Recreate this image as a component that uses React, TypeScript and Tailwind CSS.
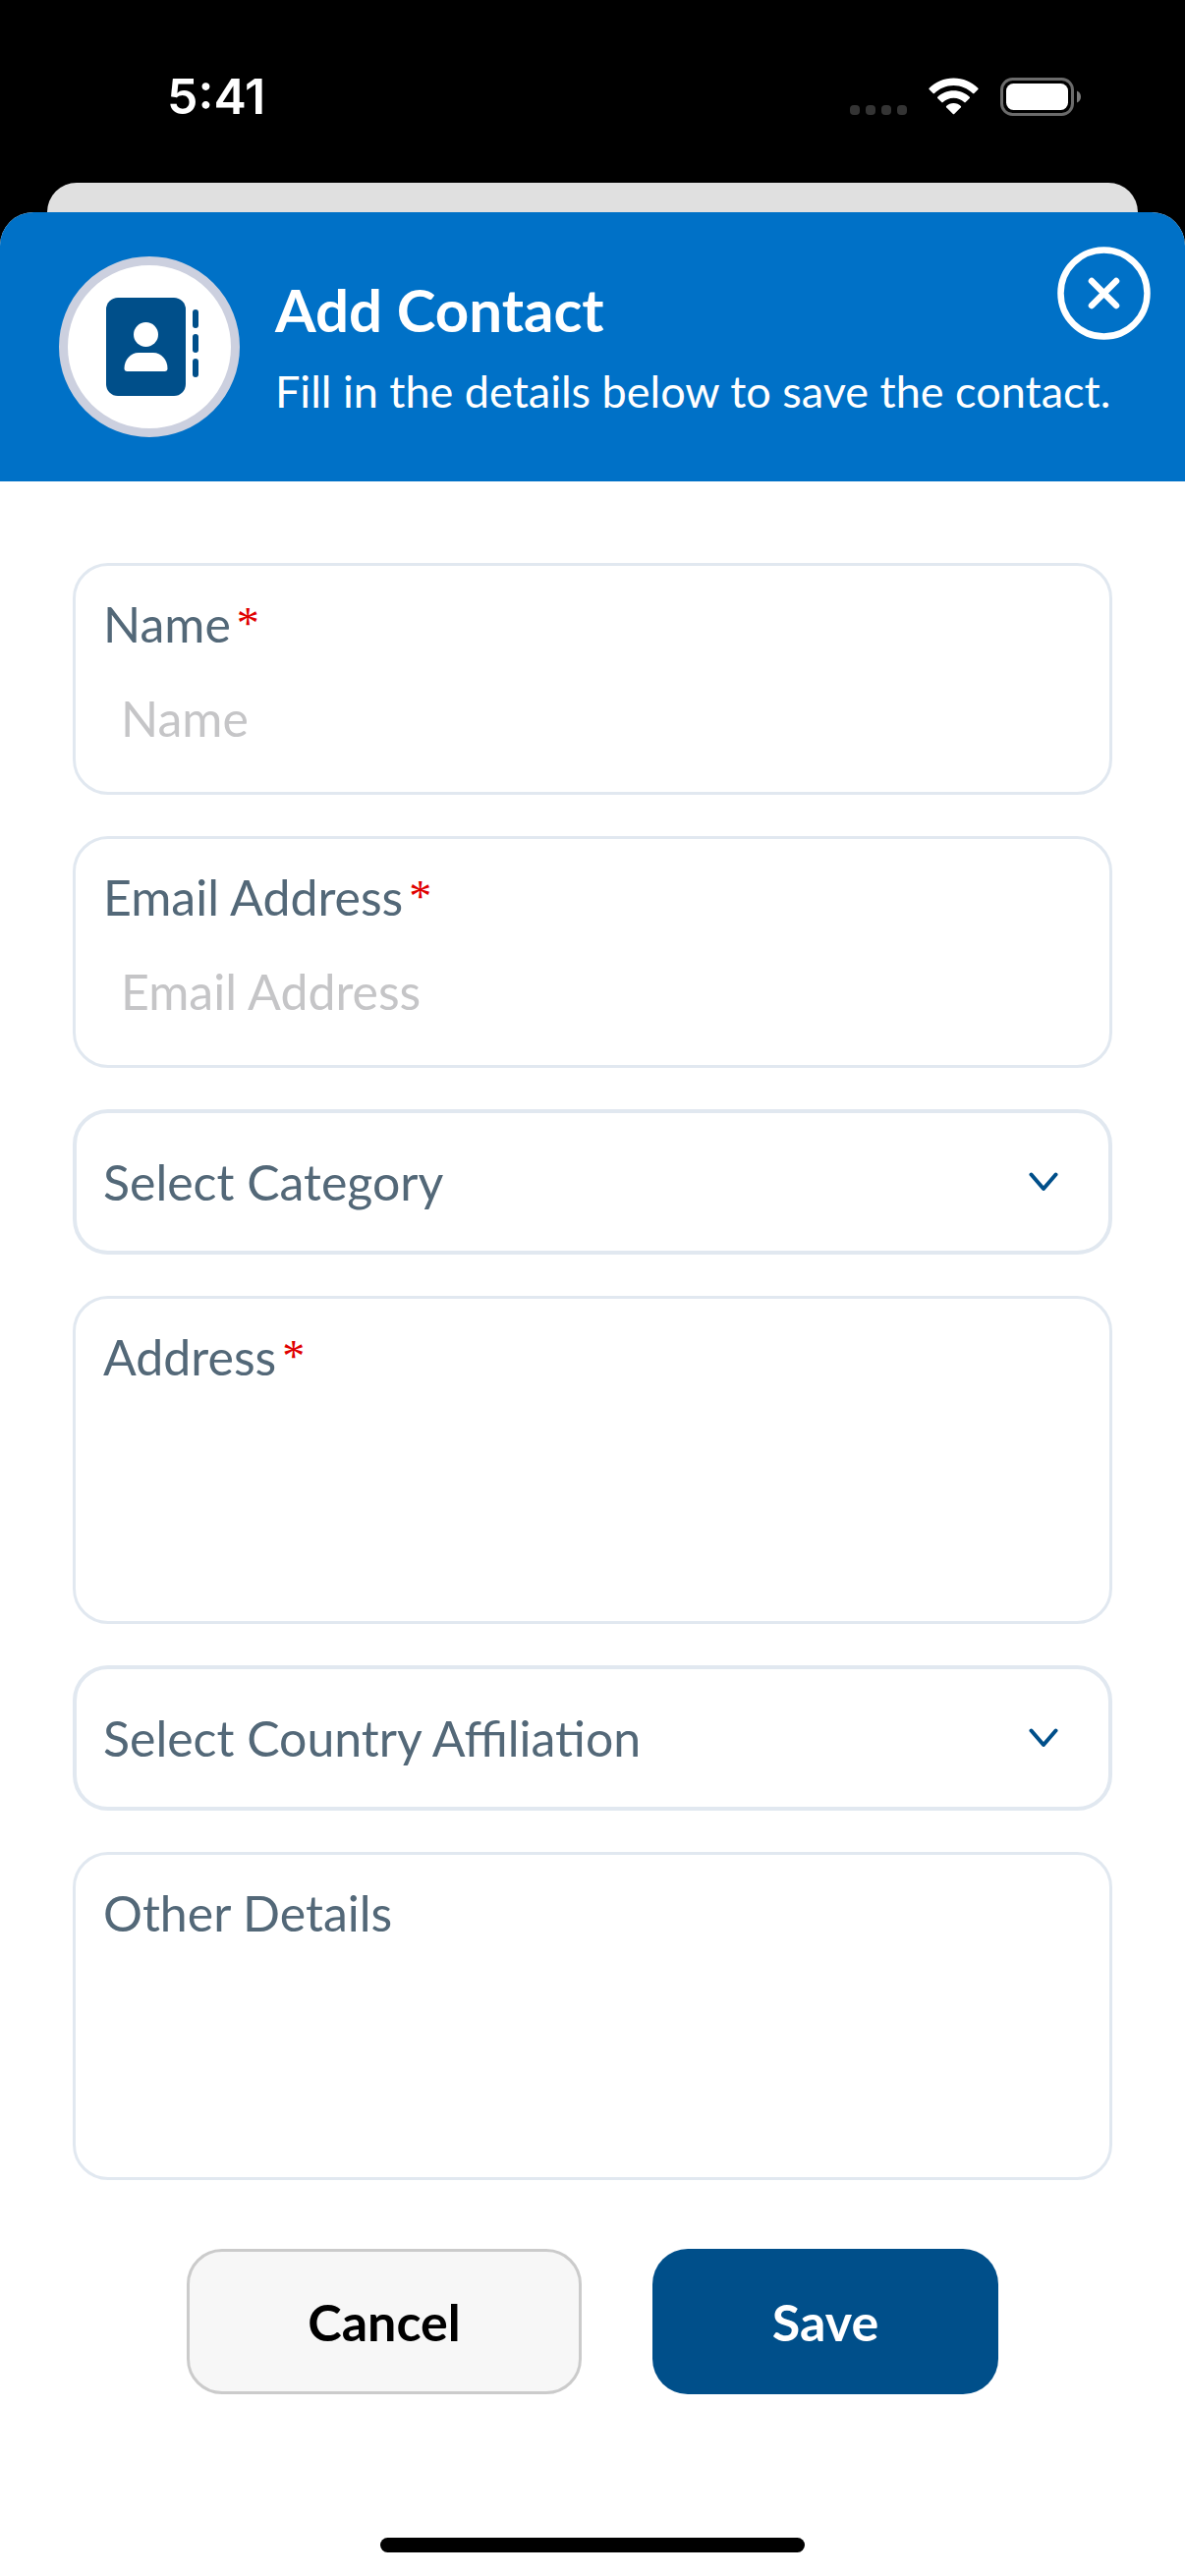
import { useState } from "react";

const categories = ["Family", "Work", "Supplier"];
const countries = ["United Kingdom", "United States", "Canada"];

function StatusBar() {
  return (
    <div className="flex h-[186px] items-center justify-between bg-black pr-[106px] pl-[170px] pt-[10px]">
      <span className="font-['Inter',sans-serif] text-[50px] leading-[60px] font-semibold text-white">5:41</span>
      <div className="flex items-center gap-[22px]">
        <div className="flex gap-[6px] pt-[27px]">
          {[0, 1, 2, 3].map((dot) => (
            <span key={dot} className="h-[10px] w-[10px] rounded-[4px] bg-[#343434]" />
          ))}
        </div>
        <svg className="h-[38px] w-[51px]" viewBox="0 0 51 38" fill="#fff">
          <path d="M25.5 0.5C35.2 0.5 44 4.3 50.4 10.7Q51 11.4 50.4 12L46.4 16Q45.7 16.6 45 16C39.9 11.1 33 8 25.5 8S11.1 11.1 6 16Q5.3 16.6 4.6 16L0.6 12Q0 11.4 0.6 10.7C7 4.3 15.8 0.5 25.5 0.5Z" />
          <path d="M25.5 13.3C31.9 13.3 37.6 15.8 41.8 19.8Q42.4 20.5 41.8 21.1L37.7 25.1Q37 25.7 36.3 25.1C33.5 22.4 29.7 20.8 25.5 20.8S17.5 22.4 14.7 25.1Q14 25.7 13.3 25.1L9.2 21.1Q8.6 20.5 9.2 19.8C13.4 15.8 19.1 13.3 25.5 13.3Z" />
          <path d="M25.5 26.1C28.4 26.1 31 27.2 32.9 28.9Q33.5 29.5 32.9 30.2L26.2 37Q25.5 37.6 24.8 37L18.1 30.2Q17.5 29.5 18.1 28.9C20 27.2 22.6 26.1 25.5 26.1Z" />
        </svg>
        <svg className="h-[39px] w-[82px]" viewBox="0 0 82 39" fill="none">
          <rect x="1.5" y="1.5" width="72" height="36" rx="11" stroke="#6b6b6b" strokeWidth="3" />
          <rect x="6" y="6" width="63" height="27" rx="7.5" fill="#fff" />
          <path d="M78 13.5C80.5 14.5 82 16.8 82 19.5S80.5 24.5 78 25.5Z" fill="#7a7a7a" />
        </svg>
      </div>
    </div>
  );
}

function ContactBookIcon() {
  return (
    <svg className="h-[100px] w-[94px]" viewBox="0 0 94 100">
      <rect x="0" y="0" width="81" height="100" rx="12" fill="#004f8a" />
      <circle cx="40.5" cy="37.5" r="12.5" fill="#fff" />
      <path d="M33 56H48C56 56 62.5 63 62.5 72Q62.5 75 59.5 75H21.5Q18.5 75 18.5 72C18.5 63 25 56 33 56Z" fill="#fff" />
      <rect x="88" y="12" width="6" height="19" rx="3" fill="#004f8a" />
      <rect x="88" y="37" width="6" height="19" rx="3" fill="#004f8a" />
      <rect x="88" y="62" width="6" height="19" rx="3" fill="#004f8a" />
    </svg>
  );
}

function FieldLabel({ id, label, required }: { id: string; label: string; required?: boolean }) {
  return (
    <label htmlFor={id} className="flex gap-[6px] text-[50px] leading-[60px] text-[#536878]">
      {label}
      {required && <span className="font-['Liberation_Serif',serif] text-[46px] text-[#e00000]">*</span>}
    </label>
  );
}

function TextField({ id, label, type }: { id: string; label: string; type: string }) {
  return (
    <div className="flex flex-col gap-[36px] rounded-[36px] border-[3px] border-[#e1e8f0] px-[28px] pt-[29px] pb-[45px]">
      <FieldLabel id={id} label={label} required />
      <input
        id={id}
        type={type}
        placeholder={label}
        className="h-[60px] w-full px-[18px] text-[50px] leading-[60px] text-[#536878] outline-none placeholder:text-[#c5c5c7]"
      />
    </div>
  );
}

function AreaField({ id, label, required }: { id: string; label: string; required?: boolean }) {
  return (
    <div className="flex flex-col rounded-[36px] border-[3px] border-[#e1e8f0] px-[28px] py-[29px]">
      <FieldLabel id={id} label={label} required={required} />
      <textarea id={id} className="h-[210px] w-full resize-none px-[18px] text-[50px] leading-[60px] text-[#536878] outline-none" />
    </div>
  );
}

function SelectField({ label, options }: { label: string; options: string[] }) {
  const [value, setValue] = useState("");

  return (
    <div className="relative">
      <select
        aria-label={label}
        value={value}
        onChange={(e) => setValue(e.target.value)}
        className="block h-[148px] w-full appearance-none rounded-[36px] border-4 border-[#e1e8f0] bg-white pr-[100px] pl-[27px] text-[50px] leading-[60px] text-[#536878] outline-none"
      >
        <option value="">{label}</option>
        {options.map((option) => (
          <option key={option}>{option}</option>
        ))}
      </select>
      <svg className="pointer-events-none absolute inset-y-0 right-[55px] my-auto h-[20px] w-[30px]" viewBox="0 0 30 20" fill="none">
        <path d="M2.500 2.500L15 17L27.500 2.500" stroke="#004f8a" strokeWidth="4" strokeLinecap="round" strokeLinejoin="round" />
      </svg>
    </div>
  );
}

export default function App() {
  return (
    <div className="flex min-h-screen flex-col bg-black font-['Lato',sans-serif]">
      <StatusBar />
      {/* edge of the sheet underneath */}
      <div className="mx-[48px] h-[30px] rounded-t-[30px] bg-[#e0e0e0]" />

      <main className="flex flex-1 flex-col overflow-hidden rounded-t-[34px] bg-white">
        <header className="relative flex items-center gap-[36px] bg-[#0071c7] px-[60px] py-[45px] text-white">
          <div className="flex h-[184px] w-[184px] shrink-0 items-center justify-center rounded-full border-[9px] border-[#ccd0df] bg-white pl-[6px]">
            <ContactBookIcon />
          </div>
          <div className="flex flex-col gap-[20px] whitespace-nowrap">
            <h1 className="text-[60px] leading-[70px] font-bold">Add Contact</h1>
            <p className="text-[45px] leading-[56px]">Fill in the details below to save the contact.</p>
          </div>
          <button type="button" aria-label="Close" className="absolute top-[35px] right-[35px] h-[95px] w-[95px] rounded-full">
            <svg className="h-full w-full" viewBox="0 0 95 95" fill="none" stroke="#fff" strokeWidth="6.5" strokeLinecap="round">
              <circle cx="47.5" cy="47.5" r="44" />
              <path d="M35 35L60 60M60 35L35 60" />
            </svg>
          </button>
        </header>

        <form className="flex flex-col gap-[42px] px-[74px] pt-[83px]" onSubmit={(e) => e.preventDefault()}>
          <TextField id="name" label="Name" type="text" />
          <TextField id="email" label="Email Address" type="email" />
          <SelectField label="Select Category" options={categories} />
          <AreaField id="address" label="Address" required />
          <SelectField label="Select Country Affiliation" options={countries} />
          <AreaField id="details" label="Other Details" />

          <div className="flex justify-center gap-[72px] pt-[28px] text-[52px] leading-[60px] font-bold">
            <button type="button" className="h-[148px] w-[402px] rounded-[36px] border-[3px] border-[#cbcbcb] bg-[#f7f7f7] text-black">
              Cancel
            </button>
            <button type="submit" className="h-[148px] w-[352px] rounded-[36px] bg-[#004f8a] text-white">
              Save
            </button>
          </div>
        </form>

        <div className="mx-auto mt-auto mb-[24px] h-[15px] w-[432px] rounded-full bg-black" />
      </main>
    </div>
  );
}
